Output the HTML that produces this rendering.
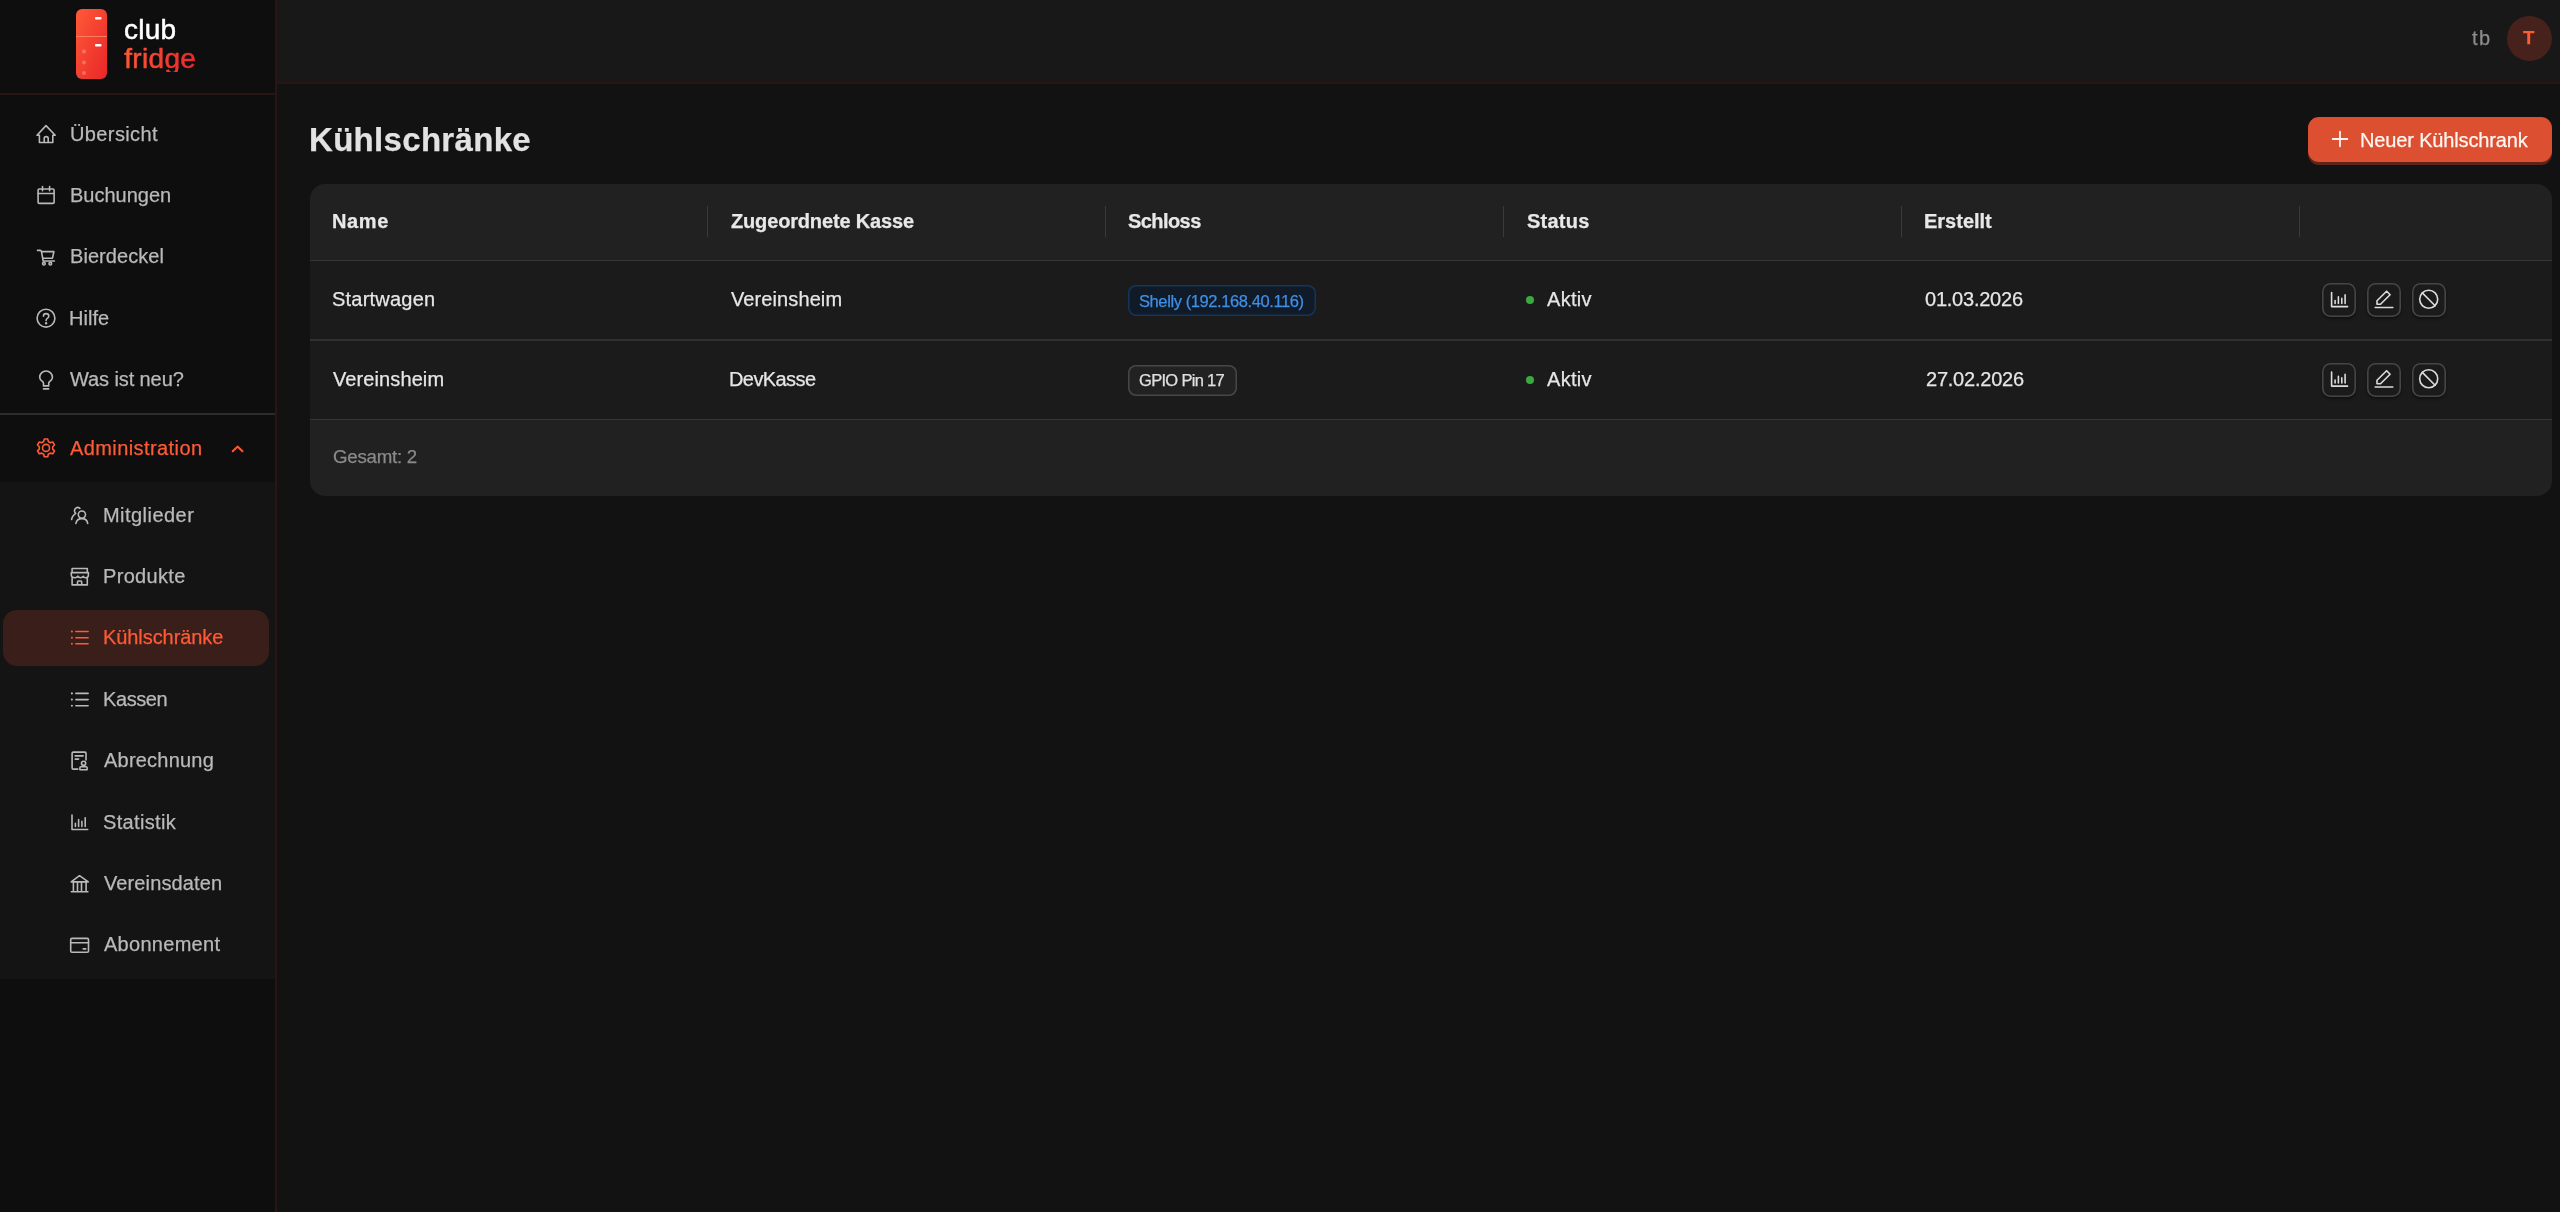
<!DOCTYPE html>
<html><head><meta charset="utf-8">
<style>
*{box-sizing:border-box;margin:0;padding:0}
html,body{width:2560px;height:1212px;overflow:hidden;background:#121212;font-family:"Liberation Sans",sans-serif}
.abs{position:absolute}
.t{position:absolute;line-height:1;white-space:nowrap;-webkit-text-stroke:0.25px currentColor;will-change:transform}
#sb{left:0;top:0;width:275px;height:1212px;background:#0e0e0e}
#sbr{left:275px;top:0;width:2px;height:1212px;background:#271613}
#logob{left:0;top:93px;width:275px;height:2px;background:#271613}
#hdr{left:277px;top:0;width:2283px;height:82px;background:#181818}
#hdrb{left:277px;top:82px;width:2283px;height:2px;background:#271613}
#sub{left:0;top:482px;width:275px;height:497px;background:#141414}
#sep{left:0;top:413px;width:275px;height:2px;background:#2c2c2c}
.nav{font-size:20px;color:#b9b9b9}
.ic{position:absolute;fill:none;stroke:#b9b9b9;stroke-width:1.5;stroke-linecap:round;stroke-linejoin:round}
#act{left:3px;top:610px;width:266px;height:56px;border-radius:14px;background:#3a1e1a}
.or{color:#ff5a36}
.ico{stroke:#ff5a36}
.th{font-size:20px;font-weight:bold;color:#e6e6e6}
.td{font-size:20px;color:#e8e8e8}
.dot{width:8px;height:8px;border-radius:50%;background:#3aaa3f}
.abtn{position:absolute;width:33.5px;height:33.5px;border-radius:8.5px;background:#1b1b1b;box-shadow:inset 0 0 0 1.6px #464646,0 2px 3px rgba(0,0,0,0.4)}
</style></head><body>
<div id="sb" class="abs"></div>
<div id="sub" class="abs"></div>
<div id="sbr" class="abs"></div>
<div id="logob" class="abs"></div>
<div id="sep" class="abs"></div>
<div id="hdr" class="abs"></div>
<div id="hdrb" class="abs"></div>
<div id="act" class="abs"></div>

<!-- logo -->
<svg class="abs" style="left:76px;top:9px" width="31" height="70" viewBox="0 0 31 70">
<defs><linearGradient id="fg" x1="0" y1="0" x2="1" y2="1"><stop offset="0" stop-color="#ff5a36"/><stop offset="1" stop-color="#e8262a"/></linearGradient></defs>
<rect x="0" y="0" width="31" height="70" rx="6" fill="url(#fg)"/>
<rect x="0" y="27" width="31" height="1" fill="#ff8a70" opacity="0.8"/>
<rect x="19" y="8" width="6.5" height="2.4" rx="1" fill="#fff"/>
<rect x="19" y="35" width="6.5" height="2.4" rx="1" fill="#fff"/>
<circle cx="8" cy="42.6" r="2" fill="#fff" opacity="0.25"/>
<circle cx="8" cy="53.4" r="2" fill="#fff" opacity="0.25"/>
<circle cx="8" cy="64.1" r="2" fill="#fff" opacity="0.25"/>
</svg>

<!-- nav items -->

<!-- header -->
<div class="abs" style="left:2507px;top:16px;width:45px;height:45px;border-radius:50%;background:#47221c"></div>

<!-- title -->


<!-- button -->
<div class="abs" style="left:2308px;top:120px;width:244px;height:45px;border-radius:11px;background:#5c241a"></div>
<div class="abs" style="left:2308px;top:117px;width:244px;height:45px;border-radius:11px;background:#dc4f30"></div>
<svg class="abs" style="left:2330px;top:129px" width="20" height="20" viewBox="0 0 20 20"><path d="M10 2.7v14.6M2.7 10h14.6" stroke="#fff4ee" stroke-width="1.8" stroke-linecap="round"/></svg>

<!-- card -->
<div class="abs" style="left:310px;top:184px;width:2242px;height:312px;border-radius:15px;background:#212121;overflow:hidden">
  <div class="abs" style="left:0;top:76px;width:2242px;height:1px;background:#373737"></div>
  <div class="abs" style="left:0;top:77px;width:2242px;height:158px;background:#1b1b1b"></div>
  <div class="abs" style="left:0;top:155px;width:2242px;height:2px;background:#303030"></div>
  <div class="abs" style="left:0;top:235px;width:2242px;height:1px;background:#373737"></div>
</div>
<div class="abs" style="left:707px;top:206px;width:1px;height:31px;background:#3a3a3a"></div>
<div class="abs" style="left:1105px;top:206px;width:1px;height:31px;background:#3a3a3a"></div>
<div class="abs" style="left:1503px;top:206px;width:1px;height:31px;background:#3a3a3a"></div>
<div class="abs" style="left:1901px;top:206px;width:1px;height:31px;background:#3a3a3a"></div>
<div class="abs" style="left:2299px;top:206px;width:1px;height:31px;background:#3a3a3a"></div>


<div class="abs" style="left:1128px;top:285px;width:188px;height:31px;border-radius:8px;background:#111a27;box-shadow:inset 0 0 0 1.5px #15355c"></div>
<div class="abs dot" style="left:1526px;top:296px"></div>

<div class="abs" style="left:1128px;top:365px;width:109px;height:31px;border-radius:8px;background:#222222;box-shadow:inset 0 0 0 1.5px #474747"></div>
<div class="abs dot" style="left:1526px;top:375.5px"></div>



<!-- sidebar icons -->
<svg class="abs" style="left:0;top:0" width="277" height="1000" viewBox="0 0 277 1000" fill="none" stroke="#b9b9b9" stroke-width="1.6" stroke-linecap="round" stroke-linejoin="round">
 <!-- home -->
 <path d="M37 135.2L46 125.6L55.2 135.2M37 135.2H39.4V142.5H52.8V135.2H55.2M44.2 142.5V138.5Q44.2 136.6 46.2 136.6Q48.2 136.6 48.2 138.5V142.5"/>
 <!-- calendar -->
 <rect x="38.1" y="189" width="16" height="14.4" rx="1.2"/>
 <path d="M38.1 193.5H54.1M42.5 186.6V190.8M49.6 186.6V190.8"/>
 <!-- cart -->
 <path d="M37.5 250.4H40.2Q41.2 250.4 41.4 251.4L43.2 261H54.4M41.7 251.6H53.9L52.5 258.2H43.1"/>
 <circle cx="43.9" cy="263.7" r="1.3"/><circle cx="50.3" cy="263.7" r="1.3"/>
 <!-- help -->
 <circle cx="46" cy="318.2" r="8.9"/>
 <path d="M43.4 316.2Q43.4 313.6 46.1 313.6Q48.8 313.6 48.8 316Q48.8 317.5 47.3 318.4Q46.1 319.1 46.1 320.6"/>
 <circle cx="46.1" cy="323.2" r="0.5" fill="#b9b9b9"/>
 <!-- bulb -->
 <path d="M43.5 385.9V383.4Q43.5 382.4 42.6 381.6Q39.7 379.3 39.7 377.4A6.35 6.35 0 0 1 52.4 377.4Q52.4 379.3 49.6 381.6Q48.7 382.4 48.7 383.4V385.9ZM43.5 388.9H48.6"/>
 <!-- chart -->
 <path d="M72 815V829.5H87.7M75.4 823.3V826.5M78.6 819.6V826.5M81.9 821.4V826.5M85.2 817.8V826.5"/>
 <!-- users -->
 <path d="M79.9 508.3A3.3 3.3 0 1 0 75.7 513.4Q73.6 514.8 72.6 516.7Q71.9 518 71.6 519.5"/>
 <circle cx="81.9" cy="514.6" r="3.6"/>
 <path d="M75.9 523.4Q76.9 518.6 81.9 518.6Q86.9 518.6 87.7 523.4"/>
 <!-- store -->
 <path d="M72.1 572.6V568.5H87.3V572.6M71.3 572.6H88.4V575Q88.4 577.7 85.5 577.7Q83.7 577.7 83.3 576.2Q82.5 577.7 80.5 577.7Q78.6 577.7 77.9 576.2Q77.1 577.7 75.1 577.7Q71.3 577.7 71.3 575ZM72.1 577.7V584.9H87.3V577.7M77.5 584.9V581.9Q77.5 581 78.4 581H80.8Q81.7 581 81.7 581.9V584.9"/>
 <!-- list (Kassen) -->
 <path d="M75.9 693.4H88.1M75.9 699.6H88.1M75.9 705.7H88.1"/>
 <circle cx="71.9" cy="693.4" r="1.05" fill="#b9b9b9" stroke="none"/><circle cx="71.9" cy="699.6" r="1.05" fill="#b9b9b9" stroke="none"/><circle cx="71.9" cy="705.7" r="1.05" fill="#b9b9b9" stroke="none"/>
 <!-- certificate -->
 <path d="M86 759.9V753.3Q86 752.1 84.8 752.1H73.3Q72.1 752.1 72.1 753.3V767.9Q72.1 769.1 73.3 769.1H77.8M75.2 755.9H83.1M75.2 759.1H78.6M83.6 765.5V766.6M80.9 766.8H86.1Q87.1 766.8 87.1 767.8V769.7H79.9V767.8Q79.9 766.8 80.9 766.8Z"/>
 <circle cx="83.6" cy="763.3" r="2.1"/>
 <!-- bank -->
 <path d="M71.2 881.9L79.5 875.7L88.3 881.9ZM73.4 882.4V891.5M77.5 882.4V891.5M81.5 882.4V891.5M86.1 882.4V891.5M71.3 891.8H87.9"/>
 <!-- card -->
 <rect x="70.7" y="938.4" width="17.8" height="13.9" rx="1.3"/>
 <path d="M70.7 942.7H88.5M83.2 948.9H85.8"/>
</svg>
<svg class="abs" style="left:0;top:420" width="277" height="260" viewBox="0 420 277 260" fill="none" stroke="#ff5a36" stroke-width="1.6" stroke-linecap="round" stroke-linejoin="round">
 <path d="M43.67 441.51 L44.28 439.07 L47.72 439.07 L48.33 441.51 L50.37 442.69 L52.79 442.00 L54.51 444.97 L52.70 446.72 L52.70 449.08 L54.51 450.83 L52.79 453.80 L50.37 453.11 L48.33 454.29 L47.72 456.73 L44.28 456.73 L43.67 454.29 L41.63 453.11 L39.21 453.80 L37.49 450.83 L39.30 449.08 L39.30 446.72 L37.49 444.97 L39.21 442.00 L41.63 442.69Z"/>
 <circle cx="46" cy="447.9" r="3.5"/>
 <path d="M232.7 451.2L237.5 446.6L242.5 451.2" stroke-width="2"/>
 <path d="M75.9 631.5H88.1M75.9 637.7H88.1M75.9 643.8H88.1"/>
 <circle cx="71.9" cy="631.5" r="1.05" fill="#ff5a36" stroke="none"/><circle cx="71.9" cy="637.7" r="1.05" fill="#ff5a36" stroke="none"/><circle cx="71.9" cy="643.8" r="1.05" fill="#ff5a36" stroke="none"/>
</svg>

<!-- action buttons -->
<div class="abtn" style="left:2322px;top:283px"></div>
<div class="abtn" style="left:2367px;top:283px"></div>
<div class="abtn" style="left:2412px;top:283px"></div>
<div class="abtn" style="left:2322px;top:363px"></div>
<div class="abtn" style="left:2367px;top:363px"></div>
<div class="abtn" style="left:2412px;top:363px"></div>
<svg class="abs" style="left:2300px;top:270px" width="160" height="140" viewBox="2300 270 160 140" fill="none" stroke="#dcdcdc" stroke-width="1.6" stroke-linecap="round" stroke-linejoin="round">
 <g id="acts">
 <path d="M2331.6 292.6V306.6H2347.6M2335.1 300.6V303.5M2338.4 296.8V303.5M2341.8 298.4V303.5M2345.1 294.9V303.5"/>
 <path d="M2375.2 307.5H2392.8M2377 304.3V300.8L2386.6 291.2L2390.1 294.7L2380.5 304.3Z"/>
 <circle cx="2428.7" cy="299.3" r="9"/>
 <path d="M2422.3 292.9L2435.1 305.7"/>
 </g>
 <use href="#acts" y="79.5"/>
</svg>

<div class="t" style="left:123.96px;top:16.30px;font-size:28.00px;letter-spacing:0.243px;color:#ffffff;-webkit-text-stroke:0.5px #fff;">club</div>
<svg class="abs" style="left:0;top:0" width="277" height="72"><defs><linearGradient id="tg" gradientUnits="userSpaceOnUse" x1="124" y1="47" x2="196" y2="72"><stop offset="0" stop-color="#ff5a36"/><stop offset="1" stop-color="#e6262b"/></linearGradient></defs><text x="124.20" y="67.9" font-family="Liberation Sans" font-size="28" letter-spacing="0.334" fill="url(#tg)" stroke="url(#tg)" stroke-width="0.5">fridge</text></svg>
<div class="t" style="left:69.70px;top:123.97px;font-size:20.00px;letter-spacing:0.385px;color:#b9b9b9;">Übersicht</div>
<div class="t" style="left:69.68px;top:185.17px;font-size:20.00px;letter-spacing:-0.010px;color:#b9b9b9;">Buchungen</div>
<div class="t" style="left:69.68px;top:246.37px;font-size:20.00px;letter-spacing:0.054px;color:#b9b9b9;">Bierdeckel</div>
<div class="t" style="left:69.44px;top:307.57px;font-size:20.00px;letter-spacing:0.020px;color:#b9b9b9;">Hilfe</div>
<div class="t" style="left:70.24px;top:368.77px;font-size:20.00px;letter-spacing:-0.098px;color:#b9b9b9;">Was ist neu?</div>
<div class="t" style="left:70.24px;top:437.67px;font-size:20.00px;letter-spacing:0.410px;color:#ff5a36;">Administration</div>
<div class="t" style="left:103.20px;top:504.67px;font-size:20.00px;letter-spacing:0.457px;color:#b9b9b9;">Mitglieder</div>
<div class="t" style="left:103.20px;top:566.07px;font-size:20.00px;letter-spacing:0.332px;color:#b9b9b9;">Produkte</div>
<div class="t" style="left:103.20px;top:627.47px;font-size:20.00px;letter-spacing:-0.075px;color:#ff5a36;">Kühlschränke</div>
<div class="t" style="left:103.20px;top:688.87px;font-size:20.00px;letter-spacing:-0.416px;color:#b9b9b9;">Kassen</div>
<div class="t" style="left:104.00px;top:750.27px;font-size:20.00px;letter-spacing:0.216px;color:#b9b9b9;">Abrechnung</div>
<div class="t" style="left:103.20px;top:811.67px;font-size:20.00px;letter-spacing:0.342px;color:#b9b9b9;">Statistik</div>
<div class="t" style="left:104.00px;top:873.07px;font-size:20.00px;letter-spacing:0.114px;color:#b9b9b9;">Vereinsdaten</div>
<div class="t" style="left:104.00px;top:934.47px;font-size:20.00px;letter-spacing:0.281px;color:#b9b9b9;">Abonnement</div>
<div class="t" style="left:2472.26px;top:27.77px;font-size:20.00px;letter-spacing:1.360px;color:#8c8c8c;">tb</div>
<div class="t" style="left:2523.34px;top:28.86px;font-size:18.60px;font-weight:bold;letter-spacing:0.000px;color:#ff5c35;">T</div>
<div class="t" style="left:309.36px;top:122.87px;font-size:33.00px;font-weight:bold;letter-spacing:0.311px;color:#e2e2e2;">Kühlschränke</div>
<div class="t" style="left:2360.42px;top:129.67px;font-size:20.00px;letter-spacing:-0.144px;color:#fff6f2;">Neuer Kühlschrank</div>
<div class="t" style="left:331.94px;top:211.27px;font-size:20.00px;font-weight:bold;letter-spacing:0.620px;color:#e8e8e8;">Name</div>
<div class="t" style="left:731.02px;top:211.27px;font-size:20.00px;font-weight:bold;letter-spacing:-0.160px;color:#e8e8e8;">Zugeordnete Kasse</div>
<div class="t" style="left:1128.48px;top:211.27px;font-size:20.00px;font-weight:bold;letter-spacing:-0.570px;color:#e8e8e8;">Schloss</div>
<div class="t" style="left:1526.76px;top:211.27px;font-size:20.00px;font-weight:bold;letter-spacing:0.232px;color:#e8e8e8;">Status</div>
<div class="t" style="left:1923.94px;top:211.27px;font-size:20.00px;font-weight:bold;letter-spacing:-0.003px;color:#e8e8e8;">Erstellt</div>
<div class="t" style="left:331.94px;top:289.47px;font-size:20.00px;letter-spacing:0.213px;color:#e6e6e6;">Startwagen</div>
<div class="t" style="left:731.02px;top:289.47px;font-size:20.00px;letter-spacing:0.100px;color:#e6e6e6;">Vereinsheim</div>
<div class="t" style="left:1547.02px;top:289.47px;font-size:20.00px;letter-spacing:0.290px;color:#e6e6e6;">Aktiv</div>
<div class="t" style="left:1924.74px;top:289.47px;font-size:20.00px;letter-spacing:-0.232px;color:#e6e6e6;">01.03.2026</div>
<div class="t" style="left:332.74px;top:369.17px;font-size:20.00px;letter-spacing:0.100px;color:#e6e6e6;">Vereinsheim</div>
<div class="t" style="left:729.42px;top:369.17px;font-size:20.00px;letter-spacing:-0.583px;color:#e6e6e6;">DevKasse</div>
<div class="t" style="left:1547.02px;top:369.17px;font-size:20.00px;letter-spacing:0.290px;color:#e6e6e6;">Aktiv</div>
<div class="t" style="left:1925.52px;top:369.17px;font-size:20.00px;letter-spacing:-0.228px;color:#e6e6e6;">27.02.2026</div>
<div class="t" style="left:1139.48px;top:292.63px;font-size:16.50px;letter-spacing:-0.408px;color:#3d8fe8;">Shelly (192.168.40.116)</div>
<div class="t" style="left:1139.48px;top:372.03px;font-size:16.50px;letter-spacing:-0.685px;color:#e0e0e0;">GPIO Pin 17</div>
<div class="t" style="left:332.74px;top:448.47px;font-size:18.70px;letter-spacing:-0.250px;color:#8a8a8a;">Gesamt: 2</div>
</body></html>
